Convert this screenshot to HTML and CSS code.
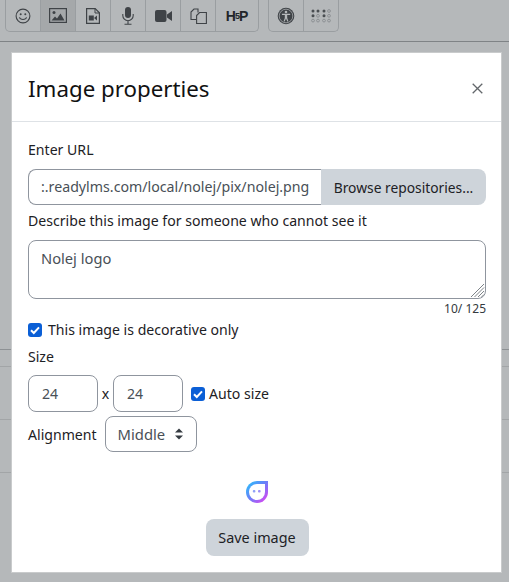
FILE: index.html
```html
<!DOCTYPE html>
<html lang="en">
<head>
    <meta charset="UTF-8">
    <title>Image properties</title>
    <link rel="stylesheet" href="styles.css">
</head>
<body>
    <div class="toolbar">
        <div class="btn-group">
            <button class="tool"><svg width="16" height="16" viewBox="0 0 16 16"><circle cx="8" cy="8" r="6.900" fill="none" stroke="#3f4347" stroke-width="1.100"/><circle cx="5.700" cy="6.200" r="1" fill="#3f4347"/><circle cx="10.300" cy="6.200" r="1" fill="#3f4347"/><path d="M4.400 9.400c.9 2.800 6.300 2.800 7.200 0" fill="none" stroke="#3f4347" stroke-width="1.100"/></svg></button>
            <button class="tool active"><svg width="18" height="15" viewBox="0 0 18 15"><rect x=".6" y=".6" width="16.800" height="13.800" fill="none" stroke="#3f4347" stroke-width="1.200"/><circle cx="5" cy="4.500" r="1.500" fill="#3f4347"/><path d="M2.500 12.500l3.500-4 2 2 3.500-5 4 7z" fill="#3f4347"/></svg></button>
            <button class="tool"><svg width="14" height="16" viewBox="0 0 14 16"><path d="M.6.600h8.600l4.200 4.200v10.600h-12.800z" fill="none" stroke="#3f4347" stroke-width="1.200"/><path d="M9 .6v4.400h4.300" fill="none" stroke="#3f4347"/><rect x="2.800" y="7.500" width="5" height="5" fill="#3f4347"/><path d="M8 10l3-2.500v5z" fill="#3f4347"/></svg></button>
            <button class="tool"><svg width="12" height="18" viewBox="0 0 12 18"><rect x="3" y="0" width="6" height="11" rx="3" fill="#3f4347"/><path d="M.8 7v1.500a5.200 5.200 0 0 0 10.400 0v-1.500M6 14v3M2.500 17.300h7" fill="none" stroke="#3f4347" stroke-width="1.100"/></svg></button>
            <button class="tool"><svg width="17" height="12" viewBox="0 0 17 12"><rect x="0" y="0" width="11.500" height="12" rx="2" fill="#3f4347"/><path d="M12 4.500l5-3.500v10l-5-3.500z" fill="#3f4347"/></svg></button>
            <button class="tool"><svg width="17" height="16" viewBox="0 0 17 16"><path d="M6 11.500h-5v-7.500l3-3h4v3.500" fill="none" stroke="#3f4347" stroke-width="1.100"/><path d="M6.600 7.500l3-3h6.800v11h-9.800z" fill="none" stroke="#3f4347" stroke-width="1.100"/></svg></button>
            <button class="tool hp">H<span class="hp-mid">5</span>P</button>
        </div>
        <div class="btn-group">
            <button class="tool"><svg width="18" height="18" viewBox="0 0 18 18"><circle cx="9" cy="9" r="8.300" fill="#3f4347"/><circle cx="9" cy="9" r="6.800" fill="none" stroke="#b5b8ba" stroke-width=".7"/><circle cx="9" cy="5" r="1.300" fill="#b5b8ba"/><path d="M4.800 6.800h8.400v1.200h-3v3l1.300 3.500h-1.200l-1.300-3-1.300 3h-1.200l1.300-3.500v-3h-2.800z" fill="#b5b8ba"/></svg></button>
            <button class="tool"><svg width="20" height="14" viewBox="0 0 20 14"><g fill="#4a4e52"><circle cx="2" cy="2" r="1.500"/><circle cx="7" cy="2" r="1.500"/><circle cx="2" cy="6.800" r="1.500"/><circle cx="13" cy="2" r="1.500"/><circle cx="13" cy="6.800" r="1.500"/></g><g fill="none" stroke="#84888b" stroke-width=".8"><circle cx="7" cy="6.800" r="1.400"/><circle cx="2" cy="11.600" r="1.400"/><circle cx="7" cy="11.600" r="1.400"/><circle cx="18" cy="2" r="1.400"/><circle cx="18" cy="6.800" r="1.400"/><circle cx="13" cy="11.600" r="1.400"/><circle cx="18" cy="11.600" r="1.400"/></g></svg></button>
        </div>
    </div>

    <div class="backdrop">
        <div class="modal">
            <div class="modal-header">
                <h2 class="modal-title">Image properties</h2>
                <svg class="close" width="11" height="11" viewBox="0 0 11 11"><path d="M.7.700l9.600 9.600M10.300.7l-9.600 9.600" stroke="#63676b" stroke-width="1.300"/></svg>
            </div>
            <div class="modal-body">
                <label class="label url-label">Enter URL</label>
                <div class="input-group">
                    <div class="url-input">:.readylms.com/local/nolej/pix/nolej.png</div>
                    <button class="btn-grey browse">Browse repositories...</button>
                </div>
                <label class="label alt-label">Describe this image for someone who cannot see it</label>
                <div class="textarea">Nolej logo
                    <svg class="grip" width="15" height="15" viewBox="0 0 15 15"><path d="M14 1L1 14M14 4.500L4.500 14M14 8L8 14M14 11.500L11.500 14" stroke="#7d8388" stroke-width="1"/></svg>
                </div>
                <div class="counter">10/ 125</div>
                <label class="check-row decor">
                    <span class="check"><svg width="14" height="14" viewBox="0 0 14 14"><path d="M3 7.200l2.800 2.800 5.200-5.600" fill="none" stroke="#fff" stroke-width="2"/></svg></span>
                    This image is decorative only
                </label>
                <div class="label size-label">Size</div>
                <div class="size-row">
                    <div class="num-input">24</div>
                    <span class="times">x</span>
                    <div class="num-input">24</div>
                    <label class="check-row auto">
                        <span class="check"><svg width="14" height="14" viewBox="0 0 14 14"><path d="M3 7.200l2.800 2.800 5.200-5.600" fill="none" stroke="#fff" stroke-width="2"/></svg></span>
                        Auto size
                    </label>
                </div>
                <div class="align-row">
                    <span class="align-label">Alignment</span>
                    <div class="select">Middle
                        <svg width="10" height="14" viewBox="0 0 10 14"><path d="M5 1.500l4 4h-8zM5 12.500l4-4h-8z" fill="#343a40"/></svg>
                    </div>
                </div>
                <div class="preview">
                    <svg width="24" height="24" viewBox="0 0 24 24">
                        <defs><linearGradient id="nolej" x1="0" y1="0" x2="1" y2="1"><stop offset="0" stop-color="#1fc8fb"/><stop offset=".5" stop-color="#6f7cf8"/><stop offset="1" stop-color="#f03af0"/></linearGradient></defs>
                        <path d="M12 1h11v11a11 11 0 1 1-11-11z" fill="url(#nolej)"/>
                        <path d="M12 4h8v8a8 8 0 1 1-8-8z" fill="#fff"/>
                        <rect x="7.800" y="10" width="2.600" height="2.600" rx="1" fill="#8fa0f7"/>
                        <rect x="13" y="10" width="2.600" height="2.600" rx="1" fill="#9d8ff7"/>
                    </svg>
                </div>
                <div class="save-row"><button class="btn-grey save">Save image</button></div>
            </div>
        </div>
    </div>

    <div class="rule rule-1"></div>
    <div class="rule rule-2"></div>
    <div class="rule rule-3"></div>
    <div class="rule rule-4"></div>
</body>
</html>
```

FILE: styles.css
```css
html, body {
    margin: 0;
    padding: 0;
    height: 582px;
    overflow: hidden;
}
body {
    position: relative;
    background-color: #b5b8ba;
    font-family: "Noto Sans", "Open Sans", Arial, sans-serif;
    font-size: 14.1px;
    color: #1d2125;
}
button {
    font-family: inherit;
    font-size: inherit;
    color: inherit;
}

/* editor toolbar behind the backdrop */
.toolbar {
    display: flex;
    gap: 9px;
    height: 42px;
    padding-left: 5px;
    box-sizing: border-box;
    border-bottom: 1px solid #7f8386;
}
.btn-group {
    display: flex;
    height: 31px;
    border: 1px solid #9a9ea1;
    border-top: none;
    border-radius: 0 0 5px 5px;
}
.tool {
    display: flex;
    align-items: center;
    justify-content: center;
    width: 35px;
    padding: 0;
    background: none;
    border: none;
    border-left: 1px solid #9a9ea1;
}
.tool:first-child {
    width: 34px;
    border-left: none;
}
.tool.active {
    background-color: #a5a8aa;
}
.tool.hp {
    width: 43px;
    font-family: "Liberation Sans", Arial, sans-serif;
    font-weight: bold;
    font-size: 14px;
    color: #22262a;
}
.hp-mid {
    font-size: 9px;
    margin: 0 -1px;
}

/* modal */
.backdrop {
    padding: 10px 7px 0 11px;
    position: relative;
    z-index: 1;
}
.modal {
    height: 521px;
    background: #fff;
    border: 1px solid #c9cbcc;
    box-sizing: border-box;
}
.modal-header {
    display: flex;
    align-items: center;
    justify-content: space-between;
    height: 69px;
    padding: 2px 18px 0 16px;
    box-sizing: border-box;
    border-bottom: 1px solid #dee2e6;
}
.modal-title {
    margin: 0;
    font-size: 22.3px;
    font-weight: 400;
    color: #111;
}
.close {
    margin-top: 1px;
}
.modal-body {
    padding: 0 15px 0 16px;
}
.label {
    display: block;
}
.url-label {
    margin-top: 18px;
    line-height: 20px;
}
.input-group {
    display: flex;
    height: 36px;
    margin-top: 9px;
}
.url-input {
    width: 293px;
    padding-left: 12px;
    box-sizing: border-box;
    border: 1px solid #8f959e;
    border-right: none;
    border-radius: 8px 0 0 8px;
    line-height: 34px;
    font-size: 14.2px;
    color: #495057;
    white-space: nowrap;
    overflow: hidden;
}
.btn-grey {
    background-color: #ced4da;
    border: none;
    border-radius: 8px;
    color: #1d2125;
}
.browse {
    flex: 1;
    padding: 0;
    font-size: 13.8px;
    border-radius: 0 8px 8px 0;
}
.alt-label {
    margin-top: 6px;
    line-height: 20px;
}
.textarea {
    position: relative;
    height: 59px;
    margin-top: 9px;
    padding: 7px 12px;
    box-sizing: border-box;
    border: 1px solid #8f959e;
    border-radius: 8px;
    font-size: 14.7px;
    color: #495057;
}
.grip {
    position: absolute;
    right: 0;
    bottom: 0;
}
.counter {
    text-align: right;
    font-size: 12px;
    line-height: 16px;
    margin-top: 2px;
    color: #343a40;
}
.check-row {
    display: flex;
    align-items: center;
    gap: 6px;
}
.check {
    display: flex;
    width: 14px;
    height: 14px;
    background-color: #0b5fd6;
    border-radius: 3px;
}
.decor {
    margin-top: 3px;
    line-height: 20px;
}
.size-label {
    margin-top: 7px;
    line-height: 20px;
}
.size-row {
    display: flex;
    align-items: center;
    margin-top: 8px;
}
.num-input {
    width: 70px;
    height: 37px;
    padding-left: 13px;
    box-sizing: border-box;
    border: 1px solid #8f959e;
    border-radius: 8px;
    line-height: 35px;
    color: #495057;
}
.times {
    width: 15px;
    text-align: center;
}
.auto {
    margin-left: 8px;
    gap: 4px;
}
.align-row {
    display: flex;
    align-items: center;
    gap: 8px;
    margin-top: 4px;
}
.select {
    display: flex;
    align-items: center;
    justify-content: space-between;
    width: 92px;
    height: 36px;
    padding: 0 12px 0 12px;
    box-sizing: border-box;
    border: 1px solid #8f959e;
    border-radius: 8px;
    font-size: 14.8px;
    color: #495057;
}
.preview {
    display: flex;
    justify-content: center;
    margin-top: 28px;
}
.save-row {
    display: flex;
    justify-content: center;
    margin-top: 15px;
}
.save {
    width: 103px;
    height: 37px;
    padding: 0;
    font-size: 14.400px;
}

/* list rows showing either side of the modal */
.rule {
    position: absolute;
    left: 0;
    right: 0;
    height: 1px;
    background-color: #a2a5a7;
}
.rule-1 { top: 349px; background-color: #8d9194; }
.rule-2 { top: 366px; }
.rule-3 { top: 419px; }
.rule-4 { top: 472px; }
```
